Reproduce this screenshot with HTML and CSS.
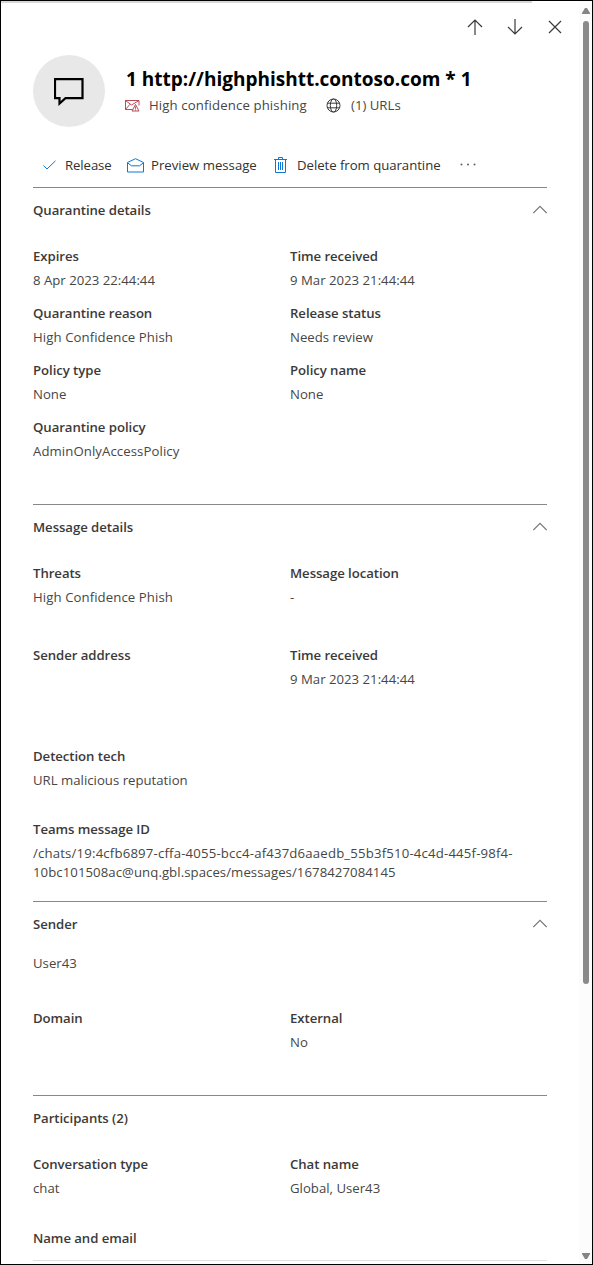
FILE: index.html
```html
<!DOCTYPE html>
<html lang="en">
<head>
<meta charset="utf-8">
<title>Quarantine details</title>
<link rel="stylesheet" href="styles.css">
</head>
<body>
<div class="frame">
  <main class="panel">
    <nav class="nav">
      <svg width="16" height="18" viewBox="0 0 16 18"><path d="M8 17V2M1 9l7-7 7 7"/></svg>
      <svg width="16" height="18" viewBox="0 0 16 18"><path d="M8 1v15M1 9l7 7 7-7"/></svg>
      <svg width="14" height="18" viewBox="0 0 14 18"><path d="M1 3l12 12M13 3L1 15"/></svg>
    </nav>
    <header class="hero">
      <div class="avatar">
        <svg width="30" height="28" viewBox="0 0 30 28"><path d="M1 1.200h27.500v19H11.500L5.500 25.500v-5.300H1z"/></svg>
      </div>
      <div class="hero-text">
        <h1 class="title">1 http://highphishtt.contoso.com * 1</h1>
        <div class="tags">
          <svg class="threat" width="15" height="13" viewBox="0 0 15 13"><path d="M7.500 10.500H.5v-9h13.500v5M.5 1.500L6.500 6l7.500-4.500M.5 10.500L5 5.200M10.500 5.500L7 12h7zM10.500 7.500v2.300M10.500 10.500v1"/></svg>
          <span class="tag-phish">High confidence phishing</span>
          <svg class="globe" width="15" height="15" viewBox="0 0 15 15"><circle cx="7.500" cy="7.500" r="6.500"/><ellipse cx="7.500" cy="7.500" rx="3.200" ry="6.500"/><path d="M1.500 5.200h12M1.500 9.800h12"/></svg>
          <span class="tag-url">(1) URLs</span>
        </div>
      </div>
    </header>
    <div class="toolbar">
      <svg class="check" width="13" height="10" viewBox="0 0 13 10"><path d="M.5 5.500l3.500 3.500L12.500.8"/></svg>
      <span class="cmd-release">Release</span>
      <svg class="mail" width="17" height="15" viewBox="0 0 17 15"><path d="M.5 4.500L8.500.7l8 3.800v9.500H.5zM.5 4.800l4 3h8l4-3"/></svg>
      <span class="cmd-preview">Preview message</span>
      <svg class="trash" width="13" height="16" viewBox="0 0 13 16"><path d="M0 2.500h13M4.500 2.500v-2h4v2M1.500 2.500v13h10v-13M4.500 5v8M6.500 5v8M8.500 5v8"/></svg>
      <span class="cmd-delete">Delete from quarantine</span>
      <svg class="more" width="17" height="3" viewBox="0 0 17 3"><circle cx="1.500" cy="1.500" r="1"/><circle cx="8" cy="1.500" r="1"/><circle cx="14.500" cy="1.500" r="1"/></svg>
    </div>

    <section class="section">
      <div class="section-head"><h2>Quarantine details</h2><svg class="chevron" width="14" height="9" viewBox="0 0 14 9"><path d="M.3 8L7 1.300 13.700 8"/></svg></div>
      <dl class="fields">
        <div><dt>Expires</dt><dd>8 Apr 2023 22:44:44</dd></div>
        <div><dt>Time received</dt><dd>9 Mar 2023 21:44:44</dd></div>
        <div><dt>Quarantine reason</dt><dd class="wide">High Confidence Phish</dd></div>
        <div><dt>Release status</dt><dd>Needs review</dd></div>
        <div><dt>Policy type</dt><dd>None</dd></div>
        <div><dt>Policy name</dt><dd>None</dd></div>
        <div><dt>Quarantine policy</dt><dd class="wide">AdminOnlyAccessPolicy</dd></div>
      </dl>
    </section>

    <section class="section section-message">
      <div class="section-head"><h2>Message details</h2><svg class="chevron" width="14" height="9" viewBox="0 0 14 9"><path d="M.3 8L7 1.300 13.700 8"/></svg></div>
      <dl class="fields">
        <div><dt>Threats</dt><dd class="wide">High Confidence Phish</dd></div>
        <div><dt>Message location</dt><dd>-</dd></div>
        <div class="row-sender"><dt>Sender address</dt><dd></dd></div>
        <div class="row-sender"><dt>Time received</dt><dd>9 Mar 2023 21:44:44</dd></div>
        <div class="row-tech"><dt>Detection tech</dt><dd>URL malicious reputation</dd></div>
        <div class="row-id"><dt>Teams message ID</dt><dd class="message-id"><span class="id-line">/chats/19:4cfb6897-cffa-4055-bcc4-af437d6aaedb_55b3f510-4c4d-445f-98f4-</span><br><span class="id-tail">10bc101508ac@unq.gbl.spaces/messages/1678427084145</span></dd></div>
      </dl>
    </section>

    <section class="section">
      <div class="section-head"><h2>Sender</h2><svg class="chevron" width="14" height="9" viewBox="0 0 14 9"><path d="M.3 8L7 1.300 13.700 8"/></svg></div>
      <p class="sender">User43</p>
      <dl class="fields fields-sender">
        <div><dt>Domain</dt><dd></dd></div>
        <div><dt>External</dt><dd>No</dd></div>
      </dl>
    </section>

    <section class="section">
      <div class="section-head"><h2>Participants (2)</h2></div>
      <dl class="fields">
        <div><dt>Conversation type</dt><dd>chat</dd></div>
        <div><dt>Chat name</dt><dd>Global, User43</dd></div>
      </dl>
      <h3 class="list-head">Name and email</h3>
    </section>
  </main>
  <div class="scrollbar">
    <svg width="8" height="6" viewBox="0 0 8 6"><path d="M0 6V5l3-5h2l3 5v1z"/></svg>
    <div class="track"><div class="thumb"></div></div>
    <svg width="8" height="6" viewBox="0 0 8 6"><path d="M0 0v1l3 5h2l3-5V0z"/></svg>
  </div>
</div>
</body>
</html>
```

FILE: styles.css
```css
* { box-sizing: border-box; margin: 0; padding: 0; }
body { font: 13.2px/24px "Open Sans", "Noto Sans", sans-serif; color: #484644; background: #fff; }
svg { fill: none; flex: none; }
.frame { display: flex; width: 593px; height: 1265px; border: 1px solid #000; overflow: hidden; background: #fff; }
.panel { flex: 1; padding: 0 32px; background: linear-gradient(#d9d7d9, #d9d7d9) 0 0 / 531px 2px no-repeat; }

.nav { display: flex; justify-content: flex-end; align-items: center; gap: 24px; height: 36px; padding-top: 15px; margin-right: -15px; }
.nav svg { stroke: #3b3a39; stroke-width: 1.2; }
.nav svg:last-child { margin-left: 1px; }

.hero { display: flex; gap: 20px; margin-top: 18px; height: 72px; }
.avatar { display: flex; align-items: center; justify-content: center; width: 72px; height: 72px; border-radius: 50%; background: #e8e8e8; }
.avatar svg { stroke: #000; stroke-width: 2.2; margin-top: 2px; }
.hero-text { white-space: nowrap; padding-top: 10px; }
.title { font-size: 19px; line-height: 28px; font-weight: 700; color: #000; padding-left: 1px; }
.tags { display: flex; align-items: center; height: 24px; }
.threat { stroke: #b03a45; stroke-width: .9; margin-right: 9px; }
.globe { stroke: #3b3a39; stroke-width: 1; margin: 0 9px 0 19px; }
.tag-phish { width: 158px; letter-spacing: .12px; }
.tag-url { padding-left: 1px; }

.toolbar { display: flex; align-items: center; height: 44px; margin-top: 16px; padding-left: 10px; color: #323130; white-space: nowrap; }
.toolbar svg { stroke: #0f78d4; stroke-width: 1; }
.check { margin-right: 9px; }
.mail { margin-right: 7px; }
.trash { margin-right: 10px; }
.cmd-release { width: 62px; letter-spacing: -.1px; }
.cmd-preview { width: 123px; }
.cmd-delete { width: 163px; letter-spacing: -.04px; }
.toolbar .more { fill: #605e5c; stroke: none; margin-bottom: 1px; }

.section { width: 514px; border-top: 1px solid #8a8886; padding-bottom: 41px; }
.section-head { display: flex; align-items: center; justify-content: space-between; height: 44px; }
h2, h3, dt { font-size: 13.2px; line-height: 24px; font-weight: 600; color: #3b3a39; letter-spacing: -.06px; }
.chevron { stroke: #797775; stroke-width: 1.2; margin-bottom: 1px; }
.fields { display: grid; grid-template-columns: 257px 257px; row-gap: 9px; margin-top: 12px; }
dd { min-height: 24px; }
.wide { letter-spacing: .08px; }
.section-message { padding-bottom: 19px; }
.section-message .fields { row-gap: 0; }
.row-sender { margin-top: 34px; }
.row-tech { margin-top: 53px; grid-column: 1 / -1; }
.row-id { margin-top: 25px; grid-column: 1 / -1; }
.message-id { padding-top: 3px; line-height: 19px; white-space: nowrap; }
.id-line { letter-spacing: .17px; }
.id-tail { letter-spacing: .06px; }
.sender { margin-top: 5px; }
.fields-sender { margin-top: 31px; }
.list-head { margin-top: 26px; height: 35px; border-bottom: 1px solid #e1dfdd; }

.scrollbar { display: flex; flex-direction: column; align-items: center; justify-content: space-between; width: 13px; padding: 7px 0 5px; background: #fcfcfc; }
.scrollbar svg { fill: #858585; }
.track { flex: 1; padding-top: 7px; }
.thumb { width: 6px; height: 963px; border-radius: 3px; background: #8a8a8a; }
```
